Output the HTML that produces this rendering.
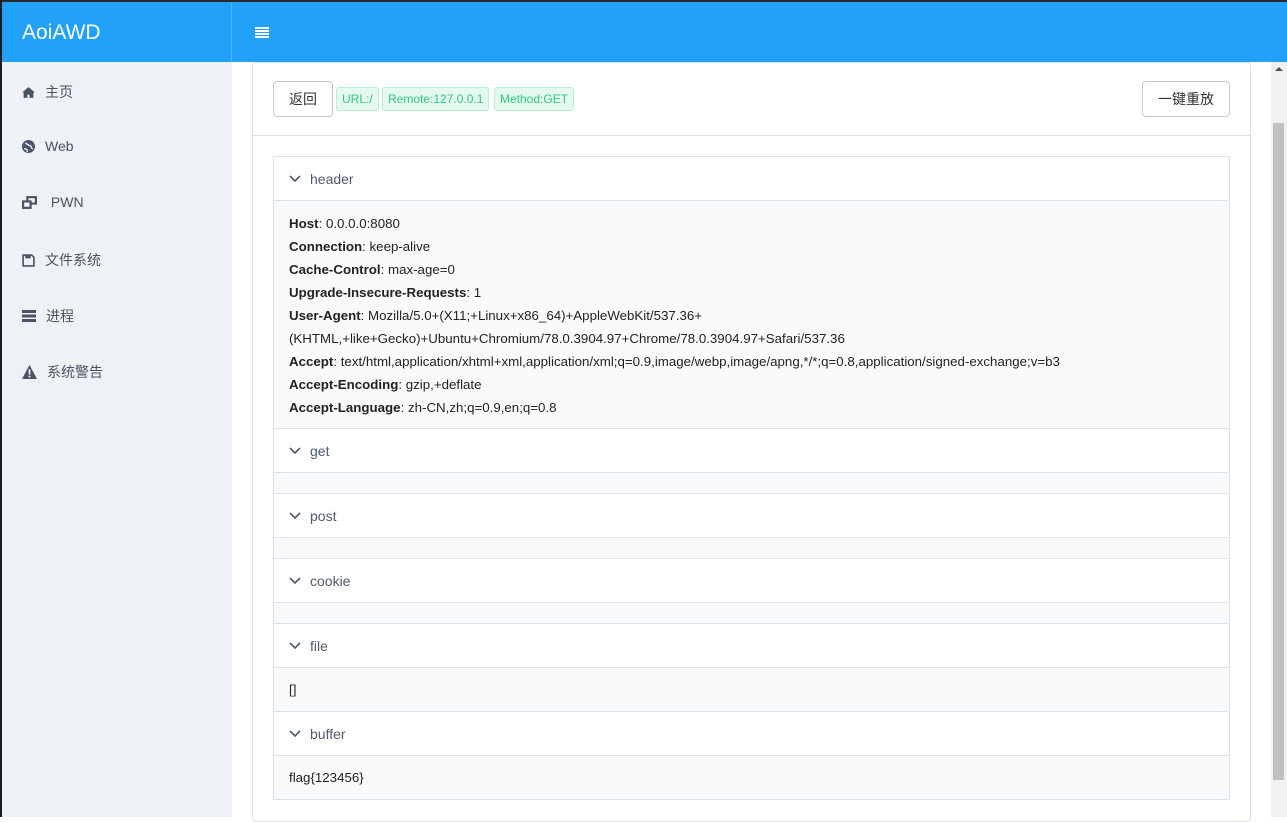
<!DOCTYPE html>
<html><head><meta charset="utf-8"><style>
*{box-sizing:border-box;margin:0;padding:0}
body{width:1287px;height:817px;overflow:hidden;background:#fff;font-family:"Liberation Sans","Noto Sans CJK SC",sans-serif;position:relative;color:#333}
.abs{position:absolute}
#top{left:0;top:0;width:1287px;height:2px;background:#2a2a2a}
#leftstrip{left:0;top:0;width:2px;height:817px;background:#1d1d1d}
#bar{left:2px;top:2px;width:1285px;height:60px;background:#22a1fb}
#logo{left:2px;top:2px;width:230px;height:60px;border-right:1px solid #4db3fb;color:#fff;font-size:21px;line-height:62px;padding-left:20px}
#ham{left:255px;top:27px;width:14px}
#ham i{display:block;height:2px;background:#fff;margin-bottom:1px}
#side{left:2px;top:62px;width:230px;height:755px;background:#eef1f6}
.nav{position:absolute;left:22px;font-size:14px;color:#4a5364;display:flex;align-items:center}
.nav svg{margin-right:10px}
#card{left:252px;top:62px;width:999px;height:760px;border:1px solid #dde3ea;border-radius:4px;background:#fff}
.btn{position:absolute;border:1px solid #c6c9cc;border-radius:4px;background:#fff;font-size:14px;color:#333;text-align:center;line-height:34px;height:36px}
.tag{position:absolute;top:87px;height:24px;line-height:22px;font-size:12px;color:#2dcc80;background:#e5f9ef;border:1px solid #b8efd3;border-radius:3px;padding:0 5px}
#hline{left:253px;top:135px;width:997px;height:1px;background:#dde3ea}
#panel{left:273px;top:156px;width:957px;height:644px;border:1px solid #dde3ea}
.t{position:absolute;left:274px;width:955px;height:44px;border-bottom:1px solid #dde3ea;font-size:14px;color:#4f5a6b;line-height:44px;padding-left:36px;background:#fff}
.t svg{position:absolute;left:15px;top:18px}
.b{position:absolute;left:274px;width:955px;background:#f8fafc;border-bottom:1px solid #dde3ea;font-size:13.3px;color:#222;padding-left:15px}
.b b{font-weight:bold;color:#222}
#sb{left:1271px;top:62px;width:16px;height:755px;background:#f1f1f1}
#thumb{left:1273px;top:123px;width:11px;height:657px;background:#c1c1c1}
</style></head><body>
<div class="abs" id="bar"></div>
<div class="abs" id="logo">AoiAWD</div>
<div class="abs" id="ham"><i></i><i></i><i></i><i></i></div>
<div class="abs" id="side"></div>
<div class="nav" style="top:82px"><svg width="13" height="11" viewBox="0 0 12 10"><path d="M6 0L0 5h1.5v5h3.5V7h2v3h3.5V5H12z" fill="#4a5364"/></svg>主页</div>
<div class="nav" style="top:138px"><svg width="13" height="13" viewBox="0 0 12 12"><circle cx="6" cy="6" r="6" fill="#4a5364"/><path d="M3 3c2 0 2 2 4 2s1 3 3 3M2 8c2 0 3 1 3 3" stroke="#eef1f6" stroke-width="1.3" fill="none"/></svg>Web</div>
<div class="nav" style="top:194px"><svg width="15" height="13" viewBox="0 0 14 12"><rect x="5" y="1" width="8" height="6" fill="none" stroke="#4a5364" stroke-width="2"/><rect x="1" y="5" width="7" height="6" fill="#eef1f6" stroke="#4a5364" stroke-width="2"/></svg>&nbsp;PWN</div>
<div class="nav" style="top:250px"><svg width="13" height="13" viewBox="0 0 12 12"><path d="M1 1h8l2 2v8H1z" fill="none" stroke="#4a5364" stroke-width="1.5"/><rect x="3" y="1" width="5" height="3" fill="#4a5364"/></svg>文件系统</div>
<div class="nav" style="top:306px"><svg width="14" height="12" viewBox="0 0 14 12"><rect x="0" y="0" width="14" height="3" fill="#4a5364"/><rect x="0" y="4.5" width="14" height="3" fill="#4a5364"/><rect x="0" y="9" width="14" height="3" fill="#4a5364"/></svg>进程</div>
<div class="nav" style="top:362px"><svg width="15" height="14" viewBox="0 0 14 13"><path d="M7 0L14 13H0z" fill="#4a5364"/><rect x="6.2" y="4" width="1.6" height="5" fill="#eef1f6"/><rect x="6.2" y="10" width="1.6" height="1.6" fill="#eef1f6"/></svg>系统警告</div>
<div class="abs" id="card"></div>
<div class="btn" style="left:273px;top:81px;width:60px">返回</div>
<div class="tag" style="left:336px">URL:/</div>
<div class="tag" style="left:382px">Remote:127.0.0.1</div>
<div class="tag" style="left:494px">Method:GET</div>
<div class="btn" style="left:1142px;top:81px;width:88px">一键重放</div>
<div class="abs" id="hline"></div>
<div class="abs" id="panel"></div>
<div class="t" style="top:157px"><svg width="12" height="8" viewBox="0 0 12 8"><path d="M1 1l5 5 5-5" stroke="#4f5a6b" stroke-width="1.6" fill="none"/></svg>header</div>
<div class="b" style="top:201px;height:228px;padding-top:11px;line-height:23px">
<b>Host</b>: 0.0.0.0:8080<br><b>Connection</b>: keep-alive<br><b>Cache-Control</b>: max-age=0<br><b>Upgrade-Insecure-Requests</b>: 1<br><b>User-Agent</b>: Mozilla/5.0+(X11;+Linux+x86_64)+AppleWebKit/537.36+<br>(KHTML,+like+Gecko)+Ubuntu+Chromium/78.0.3904.97+Chrome/78.0.3904.97+Safari/537.36<br><b>Accept</b>: text/html,application/xhtml+xml,application/xml;q=0.9,image/webp,image/apng,*/*;q=0.8,application/signed-exchange;v=b3<br><b>Accept-Encoding</b>: gzip,+deflate<br><b>Accept-Language</b>: zh-CN,zh;q=0.9,en;q=0.8</div>
<div class="t" style="top:429px"><svg width="12" height="8" viewBox="0 0 12 8"><path d="M1 1l5 5 5-5" stroke="#4f5a6b" stroke-width="1.6" fill="none"/></svg>get</div>
<div class="b" style="top:473px;height:21px"></div>
<div class="t" style="top:494px"><svg width="12" height="8" viewBox="0 0 12 8"><path d="M1 1l5 5 5-5" stroke="#4f5a6b" stroke-width="1.6" fill="none"/></svg>post</div>
<div class="b" style="top:538px;height:21px"></div>
<div class="t" style="top:559px"><svg width="12" height="8" viewBox="0 0 12 8"><path d="M1 1l5 5 5-5" stroke="#4f5a6b" stroke-width="1.6" fill="none"/></svg>cookie</div>
<div class="b" style="top:603px;height:21px"></div>
<div class="t" style="top:624px"><svg width="12" height="8" viewBox="0 0 12 8"><path d="M1 1l5 5 5-5" stroke="#4f5a6b" stroke-width="1.6" fill="none"/></svg>file</div>
<div class="b" style="top:668px;height:44px;line-height:44px">[]</div>
<div class="t" style="top:712px"><svg width="12" height="8" viewBox="0 0 12 8"><path d="M1 1l5 5 5-5" stroke="#4f5a6b" stroke-width="1.6" fill="none"/></svg>buffer</div>
<div class="b" style="top:756px;height:43px;line-height:43px;border-bottom:none">flag{123456}</div>
<div class="abs" id="sb"></div>
<div class="abs" id="thumb"></div>
<div class="abs" style="left:1275px;top:67px;width:0;height:0;border-left:4px solid transparent;border-right:4px solid transparent;border-bottom:4px solid #505050"></div>
<div class="abs" id="top"></div>
<div class="abs" id="leftstrip"></div>
</body></html>
